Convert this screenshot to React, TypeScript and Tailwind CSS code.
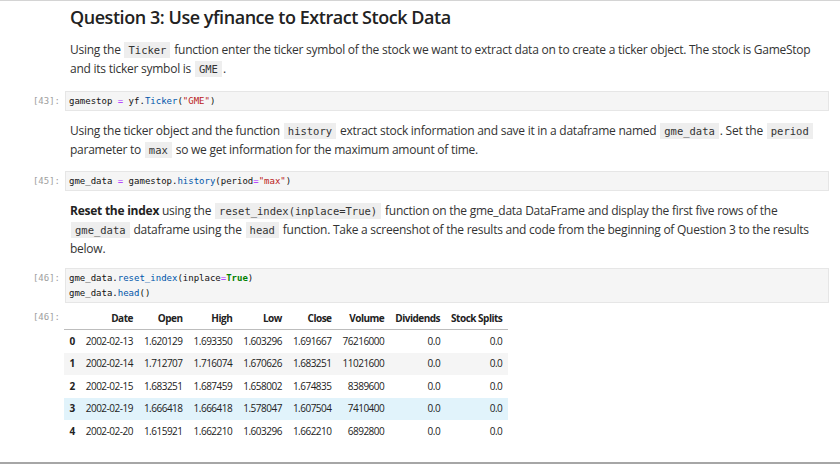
import React from 'react'

const sans = 'font-["Open_Sans","Noto_Sans",sans-serif]'
const mono = 'font-["DejaVu_Sans_Mono","Liberation_Mono",monospace]'

const Code = ({ children }: { children: React.ReactNode }) => (
  <code className={`${mono} mx-[1px] bg-[#eeeeee] px-[4px] py-[2px] text-[10.5px] leading-none tracking-normal text-[#333]`}>{children}</code>
)

const Prompt = ({ n }: { n: number }) => (
  <div className={`${mono} w-[65px] shrink-0 pr-[5px] text-right text-[9px] leading-[20px] text-[#9e9e9e]`}>[{n}]:</div>
)

const CodeCell = ({ n, children }: { n: number; children: React.ReactNode }) => (
  <div className="flex">
    <Prompt n={n} />
    <div className={`${mono} flex-1 mr-[11px] border border-[#e6e6e6] bg-[#f5f5f5] px-[3px] py-[1px] text-[9px] leading-[16px] text-[#111]`}>
      {children}
    </div>
  </div>
)

const Md = ({ children, className = '' }: { children: React.ReactNode; className?: string }) => (
  <div className={`pl-[70px] pr-[20px] text-[12px] leading-[19px] tracking-[-0.25px] text-[#333] ${className}`}>{children}</div>
)

const rows = [
  ['0', '2002-02-13', '1.620129', '1.693350', '1.603296', '1.691667', '76216000', '0.0', '0.0'],
  ['1', '2002-02-14', '1.712707', '1.716074', '1.670626', '1.683251', '11021600', '0.0', '0.0'],
  ['2', '2002-02-15', '1.683251', '1.687459', '1.658002', '1.674835', '8389600', '0.0', '0.0'],
  ['3', '2002-02-19', '1.666418', '1.666418', '1.578047', '1.607504', '7410400', '0.0', '0.0'],
  ['4', '2002-02-20', '1.615921', '1.662210', '1.603296', '1.662210', '6892800', '0.0', '0.0']
]

const heads = ['', 'Date', 'Open', 'High', 'Low', 'Close', 'Volume', 'Dividends', 'Stock Splits']

export default function App() {
  return (
    <div className={`${sans} h-[464px] w-[840px] overflow-hidden border-t border-t-[#d4d4d4] border-b-2 border-b-[#a6a6a6] bg-white`}>
      <h2 className="pl-[70px] pt-[3px] text-[18px] font-semibold leading-[26px] tracking-[-0.45px] text-[#222]">
        Question 3: Use yfinance to Extract Stock Data
      </h2>
      <Md className="mt-[10px]">
        Using the <Code>Ticker</Code> function enter the ticker symbol of the stock we want to extract data on to create a ticker object. The stock is GameStop and its ticker symbol is <Code>GME</Code>.
      </Md>
      <div className="mt-[13px]">
        <CodeCell n={43}>
          gamestop <span className="text-[#aa22ff]">=</span> yf.<span className="text-[#0055aa]">Ticker</span>(<span className="text-[#ba2121]">"GME"</span>)
        </CodeCell>
      </div>
      <Md className="mt-[10px]">
        Using the ticker object and the function <Code>history</Code> extract stock information and save it in a dataframe named <Code>gme_data</Code>. Set the <Code>period</Code> parameter to <Code>max</Code> so we get information for the maximum amount of time.
      </Md>
      <div className="mt-[12px]">
        <CodeCell n={45}>
          gme_data <span className="text-[#aa22ff]">=</span> gamestop.<span className="text-[#0055aa]">history</span>(period<span className="text-[#aa22ff]">=</span><span className="text-[#ba2121]">"max"</span>)
        </CodeCell>
      </div>
      <Md className="mt-[10px] leading-[18.5px]">
        <b className="font-bold text-[#222]">Reset the index</b> using the <Code>reset_index(inplace=True)</Code> function on the gme_data DataFrame and display the first five rows of the <Code>gme_data</Code> dataframe using the <Code>head</Code> function. Take a screenshot of the results and code from the beginning of Question 3 to the results below.
      </Md>
      <div className="mt-[10px]">
        <CodeCell n={46}>
          <div className="py-[1px] leading-[14.5px]">
            <div>
              gme_data.<span className="text-[#0055aa]">reset_index</span>(inplace<span className="text-[#aa22ff]">=</span><span className="font-bold text-[#008000]">True</span>)
            </div>
            <div>
              gme_data.<span className="text-[#0055aa]">head</span>()
            </div>
          </div>
        </CodeCell>
      </div>
      <div className="mt-[4px] flex">
        <Prompt n={46} />
        <table className="-ml-[1px] border-collapse text-[10px] tracking-[-0.5px] text-[#222]">
          <thead>
            <tr className="border-b border-b-[#bdbdbd]">
              {heads.map((h, i) => (
                <th key={i} className="px-[5.5px] py-[4.5px] text-right font-bold leading-[13px]">{h}</th>
              ))}
            </tr>
          </thead>
          <tbody>
            {rows.map((r, i) => (
              <tr key={i} className={i === 3 ? 'bg-[#e1f3fb]' : i % 2 === 1 ? 'bg-[#f5f5f5]' : ''}>
                {r.map((c, j) => (
                  <td key={j} className={`px-[5.5px] py-[4.5px] text-right leading-[13.5px] ${j === 0 ? 'font-bold' : ''}`}>{c}</td>
                ))}
              </tr>
            ))}
          </tbody>
        </table>
      </div>
    </div>
  )
}
